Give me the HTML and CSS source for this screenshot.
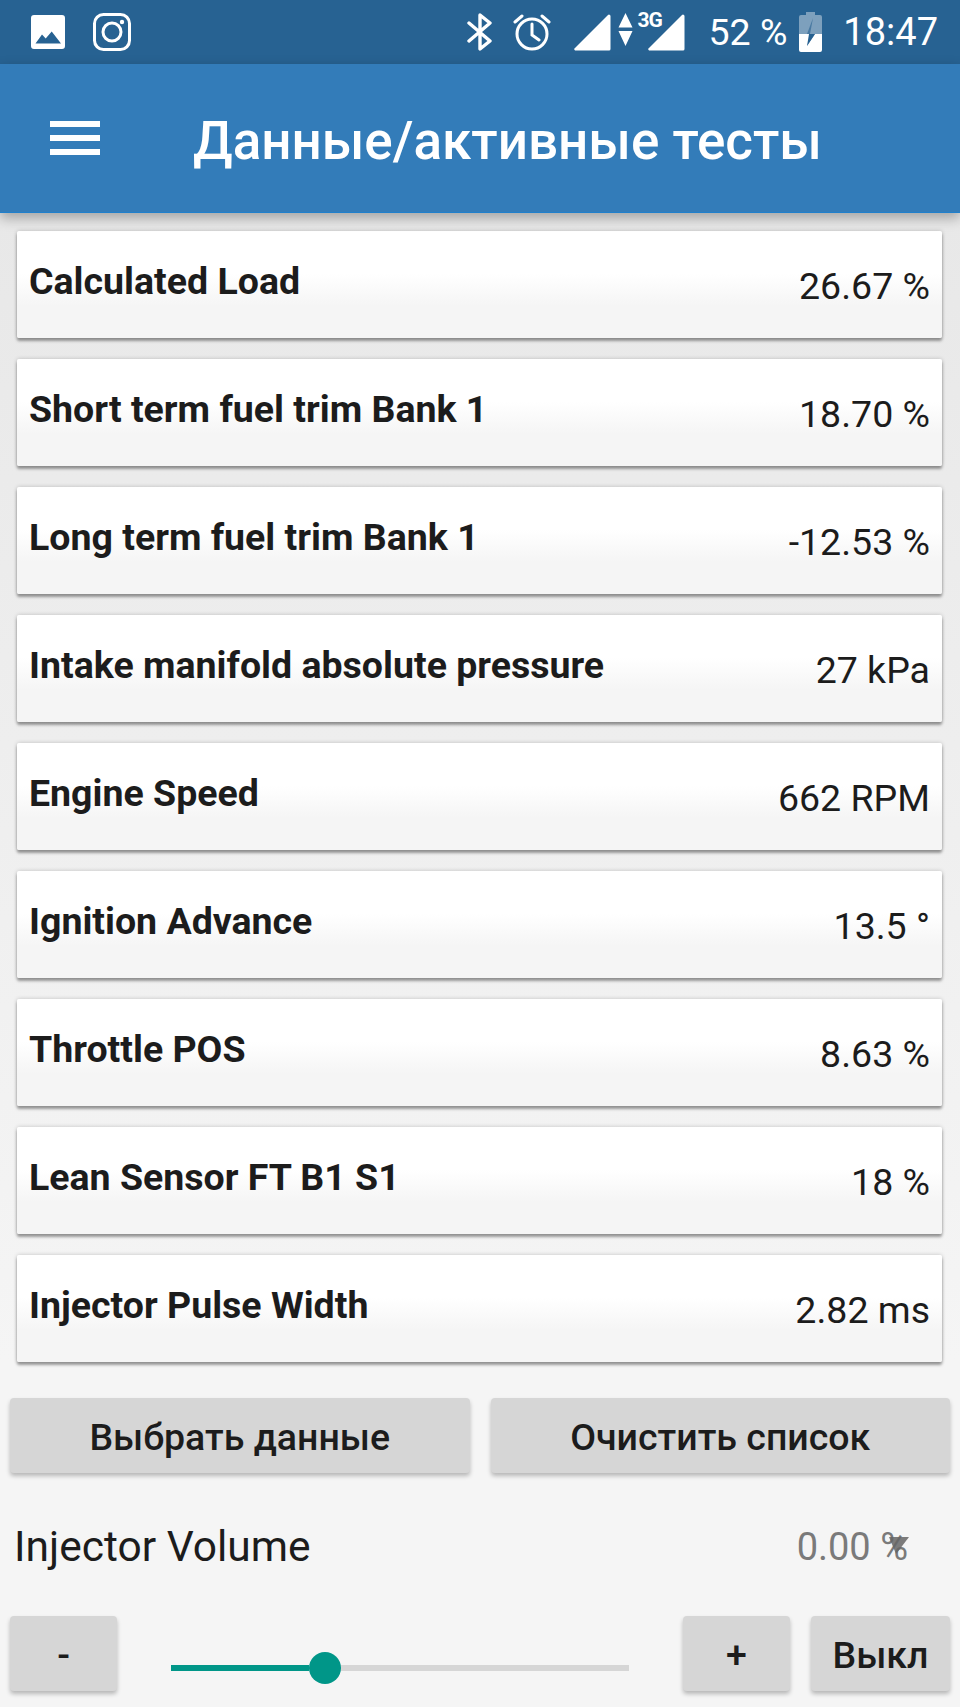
FILE: index.html
```html
<!DOCTYPE html>
<html lang="en">

<head>
    <meta charset="UTF-8">
    <meta name="viewport" content="width=device-width, initial-scale=1.0">
    <title>Данные/активные тесты</title>
    <link rel="stylesheet" href="styles.css">
</head>

<body>
    <div class="status-bar">
        <div class="status-left">
            <svg class="icon-photo" width="34" height="34" viewBox="0 0 34 34">
                <path fill="#fff" fill-rule="evenodd" d="M3 0h28a3 3 0 0 1 3 3v28a3 3 0 0 1-3 3H3a3 3 0 0 1-3-3V3a3 3 0 0 1 3-3zM4.500 28.500h25.500l-9.300-12-6 7-3.700-4z" />
            </svg>
            <svg class="icon-insta" width="38" height="38" viewBox="0 0 38 38" fill="none" stroke="#fff" stroke-width="3">
                <rect x="1.500" y="1.500" width="35" height="35" rx="9" />
                <circle cx="19" cy="19" r="9" />
                <circle cx="29" cy="9" r="2.200" fill="#fff" stroke="none" />
            </svg>
        </div>
        <div class="status-right">
            <svg width="26" height="38" viewBox="0 0 26 38" fill="none" stroke="#fff" stroke-width="3.400" stroke-linecap="round" stroke-linejoin="round">
                <path d="M2 10l21 18-10 8V2l10 8L2 28" />
            </svg>
            <svg class="icon-alarm" width="38" height="38" viewBox="0 0 38 38" fill="none" stroke="#fff" stroke-width="3" stroke-linecap="round">
                <circle cx="19" cy="21" r="15" />
                <path d="M19 11v11l7 5M2 9l7-6M36 9l-7-6" />
            </svg>
            <svg class="icon-signal-first" width="37" height="37" viewBox="0 0 37 37">
                <path fill="#fff" d="M0 35L34 1a1.500 1.500 0 0 1 2.500 1v33a1.500 1.500 0 0 1-1.500 1.500H1z" />
            </svg>
            <div class="net">
                <svg width="15" height="33" viewBox="0 0 15 33">
                    <path fill="#fff" d="M7.500 0L14.500 14.500H0.500zM0.500 18h14L7.500 33z" />
                </svg>
                <span class="net-label">3G</span>
            </div>
            <svg width="37" height="37" viewBox="0 0 37 37">
                <path fill="#fff" d="M0 35L34 1a1.500 1.500 0 0 1 2.500 1v33a1.500 1.500 0 0 1-1.500 1.500H1z" />
            </svg>
            <span class="battery-text">52 %</span>
            <svg class="icon-battery" width="23" height="40" viewBox="0 0 23 40">
                <path fill="#fff" opacity="0.4" d="M7 0h9v3h5a2 2 0 0 1 2 2v17H0V5a2 2 0 0 1 2-2h5z" />
                <path fill="#fff" d="M0 22h10l-2 12 8-12h7v16a2 2 0 0 1-2 2H2a2 2 0 0 1-2-2z" />
                <path fill="#265f8f" d="M14 6l-6 16h3zM12 22h4l-8 12z" opacity="0.6" />
            </svg>
            <span class="clock">18:47</span>
        </div>
    </div>

    <div class="toolbar">
        <div class="menu-icon">
            <span></span>
            <span></span>
            <span></span>
        </div>
        <h1>Данные/активные тесты</h1>
    </div>

    <div class="list">
        <div class="card"><span class="card-name">Calculated Load</span><span class="card-value">26.67 %</span></div>
        <div class="card"><span class="card-name">Short term fuel trim Bank 1</span><span class="card-value">18.70 %</span></div>
        <div class="card"><span class="card-name">Long term fuel trim Bank 1</span><span class="card-value">-12.53 %</span></div>
        <div class="card"><span class="card-name">Intake manifold absolute pressure</span><span class="card-value">27 kPa</span></div>
        <div class="card"><span class="card-name">Engine Speed</span><span class="card-value">662 RPM</span></div>
        <div class="card"><span class="card-name">Ignition Advance</span><span class="card-value">13.5 °</span></div>
        <div class="card"><span class="card-name">Throttle POS</span><span class="card-value">8.63 %</span></div>
        <div class="card"><span class="card-name">Lean Sensor FT B1 S1</span><span class="card-value">18 %</span></div>
        <div class="card"><span class="card-name">Injector Pulse Width</span><span class="card-value">2.82 ms</span></div>
    </div>

    <div class="actions">
        <button class="btn">Выбрать данные</button>
        <button class="btn">Очистить список</button>
    </div>

    <div class="volume-row">
        <span class="volume-label">Injector Volume</span>
        <span class="volume-value">0.00 %<svg class="spinner-arrow" width="20" height="18" viewBox="0 0 20 18"><path fill="#666" d="M0 1h20L7 18z" /></svg></span>
    </div>

    <div class="slider-row">
        <button class="btn btn-step">-</button>
        <div class="slider">
            <div class="slider-fill"></div>
            <div class="slider-thumb"></div>
            <div class="slider-rest"></div>
        </div>
        <button class="btn btn-step">+</button>
        <button class="btn btn-off">Выкл</button>
    </div>
</body>

</html>
```

FILE: styles.css
```css
* {
    box-sizing: border-box;
    margin: 0;
    padding: 0;
}

body {
    width: 960px;
    height: 1707px;
    overflow: hidden;
    font-family: Roboto, "Noto Sans", sans-serif;
    background-color: #f5f5f5;
    color: #1c1c1c;
}

.status-bar {
    height: 64px;
    padding: 0 22px 0 31px;
    display: flex;
    justify-content: space-between;
    align-items: center;
    background-color: #276292;
    color: white;
}

.status-left,
.status-right {
    display: flex;
    align-items: center;
}

.icon-insta {
    margin-left: 28px;
}

.icon-alarm {
    margin-left: 20px;
}

.icon-signal-first {
    margin-left: 23px;
}

.net {
    width: 30px;
    margin-left: 7px;
    display: flex;
    align-items: flex-start;
    gap: 4px;
    align-self: flex-start;
    padding-top: 3px;
}

.net svg {
    flex-shrink: 0;
}

.net-label {
    margin-top: -2px;
    font-size: 21px;
    font-weight: 700;
    line-height: 18px;
    letter-spacing: -1px;
    white-space: nowrap;
}

.battery-text {
    margin-left: 23px;
    font-size: 37.5px;
}

.icon-battery {
    margin-left: 12px;
}

.clock {
    margin-left: 21px;
    font-size: 38px;
}

.toolbar {
    position: relative;
    height: 149px;
    padding-left: 50px;
    display: flex;
    align-items: center;
    background-color: #337cb9;
    border-bottom: 1px solid #2080cc;
    box-shadow: 0 5px 12px rgba(0, 0, 0, 0.3);
}

.menu-icon {
    width: 50px;
    display: flex;
    flex-direction: column;
    gap: 8px;
}

.menu-icon span {
    height: 6px;
    background-color: white;
}

h1 {
    margin-left: 93px;
    font-size: 53px;
    font-weight: 500;
    color: white;
    padding-top: 6px;
}

.list {
    padding: 18px 18px 0 17px;
    display: flex;
    flex-direction: column;
    gap: 21px;
    background: linear-gradient(#e8e8e8, #f5f5f5);
}

.card {
    height: 107px;
    padding: 0 12px 0 12px;
    display: flex;
    justify-content: space-between;
    border-radius: 2px;
    background: linear-gradient(#fff 40%, #f5f5f5 70%);
    box-shadow: 0 3px 3px rgba(0, 0, 0, 0.35), 0 0 4px rgba(0, 0, 0, 0.2);
}

.card-name {
    margin-top: 29px;
    font-size: 37.5px;
    font-weight: 700;
    line-height: 42px;
}

.card-value {
    margin-top: 34px;
    font-size: 37.5px;
    line-height: 42px;
}

.actions {
    margin-top: 36px;
    padding: 0 10px;
    display: flex;
    gap: 21px;
}

.btn {
    height: 75px;
    padding-top: 2px;
    border: none;
    border-radius: 4px;
    background-color: #d6d6d6;
    box-shadow: 0 3px 4px rgba(0, 0, 0, 0.25);
    font-family: Roboto, "Noto Sans", sans-serif;
    font-size: 37.5px;
    font-weight: 500;
    color: #1c1c1c;
}

.actions .btn {
    flex: 1;
}

.volume-row {
    height: 143px;
    padding: 4px 52px 0 14px;
    display: flex;
    justify-content: space-between;
    align-items: center;
}

.volume-label {
    font-size: 42.5px;
}

.volume-value {
    position: relative;
    font-size: 38px;
    color: #7a7a7a;
}

.spinner-arrow {
    position: absolute;
    top: 11px;
    right: -1px;
    opacity: 0.85;
}

.slider-row {
    padding: 0 10px;
    display: flex;
    align-items: center;
}

.btn-step {
    width: 107px;
    flex-shrink: 0;
}

.btn-off {
    width: 139px;
    margin-left: 21px;
    flex-shrink: 0;
}

.slider {
    width: 566px;
    padding: 0 54px;
    margin-top: 28px;
    display: flex;
    align-items: center;
}

.slider-fill {
    width: 138px;
    height: 6px;
    background-color: #009688;
}

.slider-thumb {
    width: 32px;
    height: 32px;
    flex-shrink: 0;
    border-radius: 50%;
    background-color: #009688;
}

.slider-rest {
    flex: 1;
    height: 6px;
    background-color: #d6d6d6;
}
```
